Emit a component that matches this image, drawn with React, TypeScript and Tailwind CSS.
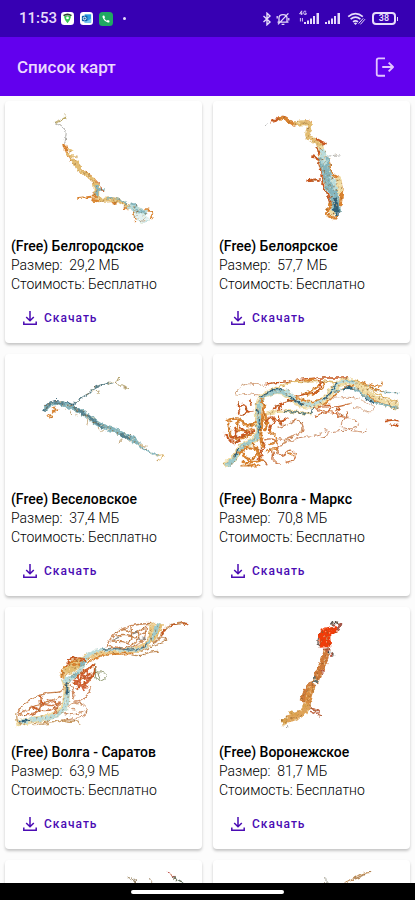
import type { ReactNode } from 'react';

interface Stroke {
  d: string;
  c: string;
  w: number;
}

interface MapItem {
  name: string;
  size: string;
  viewBox: string;
  strokes: Stroke[];
}

const GOLD = '#e3bd72';
const ORANGE = '#d9822f';
const RUST = '#c8571f';
const TEAL = '#84b5bd';
const PALE = '#b9dcdc';
const DEEP = '#2f6078';
const GREY = '#8a8a86';
const CREAM = '#f0dca4';

const belgorod: Stroke[] = [
  { d: 'M165 80 L178 75 L198 60 M180 72 L196 68', c: '#b9a765', w: 4 },
  { d: 'M165 80 L182 90 L200 103 L197 125 L194 142', c: GREY, w: 2 },
  { d: 'M192 143 L198 168 L210 188 L228 200 L236 220 L262 236 L282 250 L288 270', c: ORANGE, w: 11 },
  { d: 'M200 170 L212 188 L229 202 L238 222 L262 237 L282 251 L288 272', c: GOLD, w: 9 },
  { d: 'M226 196 L234 212 L238 224', c: GOLD, w: 15 },
  { d: 'M204 162 L222 160 L210 168 M210 180 L232 181', c: GOLD, w: 5 },
  { d: 'M288 262 L290 285 L288 305', c: GOLD, w: 17 },
  { d: 'M290 268 L292 300 M295 280 L314 280', c: TEAL, w: 8 },
  { d: 'M286 258 L300 262 M278 290 L286 292 M302 272 L312 288', c: RUST, w: 3 },
  { d: 'M232 306 L260 304 L290 300', c: ORANGE, w: 6 },
  { d: 'M282 312 L320 312 L345 308 L370 322 L396 338', c: GOLD, w: 12 },
  { d: 'M275 311 L296 314 M338 320 L350 321 M368 336 L386 338', c: ORANGE, w: 10 },
  { d: 'M320 309 L345 305 L368 316 L384 324', c: TEAL, w: 4 },
  { d: 'M388 328 L412 345 L442 352', c: PALE, w: 20 },
  { d: 'M410 352 L424 370 L442 364', c: '#e2f1f1', w: 16 },
  { d: 'M392 322 L415 328 L402 336 M396 340 L440 354 M425 342 L440 356', c: TEAL, w: 5 },
  { d: 'M402 345 L408 370 L425 381 L446 374', c: PALE, w: 3 },
  { d: 'M432 340 L450 338 L460 354 L448 370 M400 348 L408 375', c: ORANGE, w: 5 },
];

const beloyarsk: Stroke[] = [
  { d: 'M174 90 L182 84', c: GREY, w: 2 },
  { d: 'M190 74 L206 78 L214 64 L236 62 L246 78 L264 86', c: RUST, w: 8 },
  { d: 'M214 66 L236 64 L248 80 L275 84 L302 76 L312 84', c: ORANGE, w: 11 },
  { d: 'M262 84 L290 78 L310 84 L304 102 L300 122 L322 134 L344 142', c: GOLD, w: 15 },
  { d: 'M326 128 L342 138 L356 142 L340 148', c: RUST, w: 8 },
  { d: 'M304 120 L325 135 L346 152 L338 176', c: GOLD, w: 13 },
  { d: 'M340 150 L346 176 L350 205', c: CREAM, w: 18 },
  { d: 'M316 182 L336 184 L336 200 M330 154 L338 176 M334 190 L340 212', c: RUST, w: 8 },
  { d: 'M368 184 L376 178 L398 177', c: GREY, w: 2 },
  { d: 'M350 180 L366 184 L370 235 L402 246 L404 300', c: ORANGE, w: 7 },
  { d: 'M298 254 L322 250 L338 252', c: RUST, w: 6 },
  { d: 'M350 200 L356 250 L376 280 L396 258', c: CREAM, w: 28 },
  { d: 'M394 244 L396 270 L398 300', c: CREAM, w: 18 },
  { d: 'M350 180 L354 225 L364 262 L382 295 L388 350', c: TEAL, w: 28 },
  { d: 'M344 160 L354 205 M370 240 L382 256 L386 280', c: PALE, w: 14 },
  { d: 'M340 210 L344 250 L348 270 L362 296 L372 320', c: RUST, w: 5 },
  { d: 'M370 318 L368 336 L354 354 L376 366 L393 366 M404 288 L400 330', c: ORANGE, w: 9 },
  { d: 'M366 344 L380 356', c: CREAM, w: 12 },
  { d: 'M382 306 L390 320 L390 362 M380 340 L392 350', c: DEEP, w: 10 },
];

const veselovsk: Stroke[] = [
  { d: 'M222 162 L246 142 L268 130 L282 112 L300 106 L340 98', c: '#5b8089', w: 4 },
  { d: 'M280 120 L304 124 L290 132 M325 100 L352 92 L360 84 M345 98 L364 108 L384 116', c: '#b7a775', w: 3 },
  { d: 'M132 182 L142 164 L166 154 L186 160 L222 168', c: DEEP, w: 12 },
  { d: 'M134 178 L150 160 L176 158 L216 172 L244 184 L268 204 L302 228 L334 238 L356 246', c: TEAL, w: 14 },
  { d: 'M132 184 L144 164 L164 156 L190 162 M222 172 L256 192 L284 214 L310 234', c: '#55828f', w: 8 },
  { d: 'M350 244 L376 260 L398 264 L414 282', c: TEAL, w: 16 },
  { d: 'M360 252 L380 264 L394 262', c: '#55828f', w: 8 },
  { d: 'M408 270 L420 290 L444 304 L478 318', c: TEAL, w: 6 },
  { d: 'M470 318 L490 312 L492 322 L470 330 M484 322 L494 318', c: GOLD, w: 3 },
  { d: 'M146 192 L158 194 L150 206 L144 196 M156 176 L164 168 L168 184 L156 186 M170 182 L178 180', c: ORANGE, w: 5 },
  { d: 'M196 172 L196 182 M208 182 L216 196 M226 188 L230 202 M264 206 L260 228 M294 232 L298 248 L312 240 M364 264 L360 278 M384 270 L392 276 M420 286 L440 288', c: '#cdb58e', w: 3 },
];

const marks: Stroke[] = [
  { d: 'M84 134 L92 112 L126 100 L160 100 L176 112 M86 136 L108 128 L136 134 L158 134', c: '#d8a988', w: 3 },
  { d: 'M176 102 L198 98 L246 96 L280 88 L320 84 L370 84 L420 84', c: RUST, w: 4 },
  { d: 'M196 118 L230 104 L262 92 L310 96 L345 92 L390 96', c: GOLD, w: 5 },
  { d: 'M290 92 L322 86 M286 134 L320 122 L348 94 L356 106 L336 124 L300 136', c: ORANGE, w: 6 },
  { d: 'M270 140 L300 128 L330 130 L345 104 L330 90 M336 92 L350 98', c: RUST, w: 4 },
  { d: 'M52 344 L84 330 L94 300 L116 280 L148 270 L158 240 L152 186 L158 146 L186 126 L220 120 L248 138 L270 160 L310 168 L345 156 L372 128 L398 94 L440 96 L472 122 L510 152 L574 170', c: CREAM, w: 20 },
  { d: 'M240 128 L276 146 L310 158 L345 146 M346 166 L380 142 L402 116 L440 106 M480 132 L510 160 L574 174', c: ORANGE, w: 5 },
  { d: 'M60 346 L86 328 L96 298 L116 280 L150 268 L158 240 L154 186 L158 150 L184 128 L220 122 L246 136', c: '#9cc9cb', w: 13 },
  { d: 'M236 122 L256 138 L272 158 L310 166', c: PALE, w: 12 },
  { d: 'M310 168 L345 154 L372 130 L390 98 L414 92 L448 100', c: PALE, w: 9 },
  { d: 'M160 142 L172 132 L200 118 L234 118 M244 136 L260 148 L276 160 L290 164 M350 148 L372 126 L390 98 M146 180 L156 184 M84 320 L94 296 M158 210 L156 250', c: DEEP, w: 5 },
  { d: 'M380 126 L420 112 L444 116 L476 140 L510 160 L574 174', c: TEAL, w: 6 },
  { d: 'M404 122 L420 112 L436 112 M474 144 L504 160', c: DEEP, w: 5 },
  { d: 'M420 92 L464 96 L492 112 L530 128 L574 128', c: TEAL, w: 4 },
  { d: 'M440 90 L470 100 L500 126 L540 146 L574 156', c: GOLD, w: 6 },
  { d: 'M460 96 L500 108 L520 110 L526 98 M488 112 L526 124', c: ORANGE, w: 4 },
  { d: 'M164 214 L176 192 L206 184 L256 184 L314 192', c: CREAM, w: 9 },
  { d: 'M230 184 L262 184 L314 194 L320 174', c: '#527a80', w: 4 },
  { d: 'M160 150 L172 154 L168 190 L164 230 L160 262 L166 290 M176 190 L182 212 L174 240', c: ORANGE, w: 9 },
  { d: 'M92 156 L100 180 L92 192 L112 196 L130 182 M96 166 L112 160 L120 184 L140 182 M128 150 L132 170', c: RUST, w: 5 },
  { d: 'M60 214 L72 206 L96 204 L110 222 L136 228 L148 214 M62 218 L72 240 L66 256 L86 268 L110 264 L140 250 M96 206 L84 236 L106 246 L140 236', c: ORANGE, w: 7 },
  { d: 'M52 250 L66 264 L80 282 L100 272 M72 262 L96 262 L124 252 M80 232 L92 246 L78 270 M98 228 L118 254 L142 242', c: RUST, w: 7 },
  { d: 'M92 314 L110 298 L128 290 L148 298 L150 318 L132 330 L112 322 L110 306 M104 336 L148 338 L168 326 M100 346 L160 346 M136 280 L158 300 L156 330', c: ORANGE, w: 7 },
  { d: 'M162 300 L176 286 L166 276 M150 330 L166 318 L164 300 M176 214 L190 196 L208 214 L184 228 L192 250', c: RUST, w: 6 },
  { d: 'M196 180 L206 168 L222 166 M208 182 L224 176 L220 158 M222 164 L240 150 L262 154 M200 200 L212 220 L244 204 M216 198 L224 224', c: RUST, w: 5 },
  { d: 'M212 232 L240 226 L262 208 L286 216 L290 246 L262 256 L240 270 L212 266 M220 290 L236 270 L260 274', c: '#cf8a5e', w: 4 },
  { d: 'M172 270 L196 262 L218 284 L206 308 L226 320 L246 296 L268 310 L262 332 L236 338 M184 296 L204 306 L194 330 L218 346 M168 330 L184 346', c: '#cc7440', w: 4 },
  { d: 'M188 240 L212 256 L204 282 L184 284 M176 306 L194 294 L212 300 M240 308 L262 318 M178 250 L200 248', c: ORANGE, w: 4 },
  { d: 'M320 176 L352 168 L392 172 L430 160 M322 200 L350 186 L382 184 L398 200 L424 206 L420 184 M330 178 L360 186 L372 176', c: '#d0733f', w: 4 },
  { d: 'M354 168 L370 168 M388 178 L398 176', c: RUST, w: 7 },
  { d: 'M366 146 L424 140 L460 146 L478 160 L498 166 L502 182 L478 188 L466 176 L440 172', c: '#dcb196', w: 3 },
  { d: 'M390 186 L406 200 L436 206 L456 218 L452 234 L420 238 L398 228 L412 206', c: '#cf9270', w: 3 },
  { d: 'M260 268 L294 258 L344 254 L352 238 L366 240 L360 260 L344 264 M366 246 L404 240 L440 242 L470 248 L480 238', c: '#cc8c68', w: 3 },
  { d: 'M532 216 L552 208 L574 212 M548 222 L566 228 L574 226', c: RUST, w: 5 },
];

const saratov: Stroke[] = [
  { d: 'M48 370 L86 362 L130 356 L172 344 L196 318 L202 270 L194 238', c: CREAM, w: 20 },
  { d: 'M54 368 L100 358 L150 354 L182 340 L200 316 L204 270', c: PALE, w: 13 },
  { d: 'M54 366 L90 360 M196 240 L204 256 L200 284', c: DEEP, w: 6 },
  { d: 'M186 232 L202 204 L240 180 L280 164 L330 156 L400 152 L440 138 L456 110 L468 70', c: '#ecc988', w: 18 },
  { d: 'M198 214 L224 192 L250 186', c: GOLD, w: 32 },
  { d: 'M188 206 L210 184 L244 176 M216 196 L244 192 M186 208 L184 236', c: ORANGE, w: 6 },
  { d: 'M250 190 L246 208 L226 222 L206 244 L190 236', c: PALE, w: 12 },
  { d: 'M212 232 L236 218 M246 176 L262 178 L240 198', c: TEAL, w: 6 },
  { d: 'M250 182 L262 160 L312 148 L354 148 L408 152 L442 138', c: PALE, w: 10 },
  { d: 'M310 148 L348 144 L396 152 L430 144 L446 128', c: '#527a88', w: 4 },
  { d: 'M444 130 L462 108 L470 70 M454 120 L480 70', c: '#9cc9cb', w: 9 },
  { d: 'M456 128 L474 100 L486 72 M450 112 L452 70', c: GOLD, w: 7 },
  { d: 'M318 140 L334 108 L364 86 L404 74 L450 70 M322 138 L370 146 L410 138 L434 118 L440 76', c: '#cd8a5a', w: 4 },
  { d: 'M346 108 L380 104 L404 116 L440 94 M364 92 L376 84 L402 104 L436 82 M332 124 L364 122 L398 138 L420 110 L412 92 M392 80 L398 102 L386 130', c: '#c9854f', w: 4 },
  { d: 'M340 118 L360 112 M398 102 L412 96 M414 120 L436 112', c: GREY, w: 4 },
  { d: 'M458 130 L478 120 L490 92 L512 74 L540 70 L566 72', c: '#c98c5a', w: 6 },
  { d: 'M510 80 L524 72 M544 70 L568 73 M492 88 L486 108', c: RUST, w: 6 },
  { d: 'M470 114 L500 112 L500 122 L478 128 L450 144 L420 154 M390 164 L420 170 L446 156 L476 154', c: '#c69362', w: 4 },
  { d: 'M262 190 L290 168 L340 162 L400 160', c: ORANGE, w: 5 },
  { d: 'M204 178 L240 168 L252 180 L242 186 M196 200 L206 184', c: RUST, w: 7 },
  { d: 'M226 236 L246 214 L270 206 L282 192 M222 254 L248 232 L274 222 M230 266 L256 250 L284 222 L286 196', c: RUST, w: 7 },
  { d: 'M220 240 L240 262 L264 258 M232 232 L252 272 M244 220 L264 246 M262 208 L268 236 L254 258', c: '#d4633a', w: 7 },
  { d: 'M282 190 L290 206 L284 232 L296 244 L316 238 L322 224 L304 214 L286 218 M292 214 L300 240', c: '#8e9a72', w: 3 },
  { d: 'M212 252 L226 284 L214 302 L238 304 L266 284 L272 256', c: '#d08a60', w: 4 },
  { d: 'M52 338 L70 310 L106 290 L150 276 L186 278 L196 252 M56 344 L100 318 L146 308 L186 286', c: '#cd8654', w: 4 },
  { d: 'M118 288 L126 316 L110 340 L70 346 M126 312 L156 320 L182 308 M92 322 L132 336 L172 322 M140 300 L176 300 L164 340', c: '#d07a48', w: 5 },
  { d: 'M120 290 L132 312 M96 320 L112 326', c: RUST, w: 6 },
  { d: 'M204 320 L226 302 L256 318 L262 338 L244 352 L214 358 L180 362 M214 328 L232 330 M196 340 L214 348 L250 334', c: '#d29a74', w: 4 },
  { d: 'M100 374 L150 372 L184 358 L206 366 L234 360 L240 374 M50 340 L50 372 L70 374 M130 372 L150 360', c: '#c99a62', w: 4 },
];

const voronezh: Stroke[] = [
  { d: 'M374 66 L382 62 L404 72 L398 84 M370 76 L378 66', c: '#58524e', w: 4 },
  { d: 'M376 76 L384 72 M396 74 L404 70 L400 84 L386 90', c: '#a4574a', w: 7 },
  { d: 'M340 92 L334 116 L332 132 L340 138', c: '#6b5b55', w: 4 },
  { d: 'M356 142 L354 120 L352 104 L358 88', c: '#f03c0a', w: 34 },
  { d: 'M358 96 L372 92 L390 88', c: '#f03c0a', w: 20 },
  { d: 'M348 150 L370 148', c: '#ad5033', w: 8 },
  { d: 'M360 152 L354 176 L342 202 L332 224 L324 246', c: '#cf7a38', w: 20 },
  { d: 'M364 156 L370 160 M376 162 L382 164', c: '#2c3c40', w: 8 },
  { d: 'M344 214 L352 208 L350 222 M370 170 L376 160', c: '#b34a35', w: 4 },
  { d: 'M322 228 L322 246 M326 240 L334 244', c: '#5c7274', w: 7 },
  { d: 'M320 250 L304 268 L292 286 L288 304', c: '#cf7a38', w: 20 },
  { d: 'M314 258 L306 290 L298 318', c: '#d98d40', w: 22 },
  { d: 'M302 312 L294 334 L276 344 L256 354 L238 358', c: '#dfa458', w: 22 },
  { d: 'M246 338 L268 344 M222 362 L244 360 M226 372 L242 366 M288 320 L300 312', c: '#d8a04c', w: 9 },
  { d: 'M306 322 L322 326 L338 338 L340 350 M310 334 L336 344', c: '#c06a4a', w: 5 },
  { d: 'M238 378 L240 382', c: GREY, w: 2 },
];

const nextLeft: Stroke[] = [
  { d: 'M386 234 L396 240 L410 248 L430 270 M398 232 L408 246 M408 234 L410 250', c: '#8d7a5a', w: 3 },
  { d: 'M448 234 L454 242 L450 260', c: '#b9a790', w: 3 },
  { d: 'M504 217 L516 224 L526 234', c: '#c0504a', w: 4 },
  { d: 'M524 232 L530 244 L550 250', c: '#6a7c6c', w: 4 },
];

const nextRight: Stroke[] = [
  { d: 'M356 232 L358 246 M352 244 L366 250', c: '#a9aaa0', w: 3 },
  { d: 'M412 250 L432 242 L452 228 L466 220 L492 217', c: '#c79a68', w: 4 },
  { d: 'M440 238 L468 228 L474 222', c: '#b58a5c', w: 4 },
];

const maps: MapItem[] = [
  { name: 'Белгородское', size: '29,2 МБ', viewBox: '15 15 591 405', strokes: belgorod },
  { name: 'Белоярское', size: '57,7 МБ', viewBox: '18 15 591 405', strokes: beloyarsk },
  { name: 'Веселовское', size: '37,4 МБ', viewBox: '15 12 591 405', strokes: veselovsk },
  { name: 'Волга - Маркс', size: '70,8 МБ', viewBox: '18 12 591 405', strokes: marks },
  { name: 'Волга - Саратов', size: '63,9 МБ', viewBox: '15 21 591 405', strokes: saratov },
  { name: 'Воронежское', size: '81,7 МБ', viewBox: '18 21 591 405', strokes: voronezh },
];

// rounds the corners of a polyline path by running curves through segment midpoints
const smooth = (d: string) =>
  d
    .split('M')
    .filter(Boolean)
    .map((part) => {
      const pts = part.split('L').map((p) => p.trim().split(' ').map(Number));
      const last = pts[pts.length - 1];
      let out = `M${pts[0].join(' ')}`;
      for (let i = 1; i < pts.length - 1; i++) {
        const [x, y] = pts[i];
        const [nx, ny] = pts[i + 1];
        out += `Q${x} ${y} ${(x + nx) / 2} ${(y + ny) / 2}`;
      }
      return `${out}L${last.join(' ')}`;
    })
    .join('');

const MapPreview = ({ viewBox, strokes }: { viewBox: string; strokes: Stroke[] }) => (
  <svg viewBox={viewBox} className="block h-[135px] w-full" fill="none" aria-hidden="true">
    <g filter="url(#shore)" strokeLinejoin="round">
      {strokes.map((s, i) => (
        <path key={i} d={smooth(s.d)} stroke={s.c} strokeWidth={s.w} />
      ))}
    </g>
  </svg>
);

const Card = ({ children }: { children: ReactNode }) => (
  <article className="h-[242px] rounded bg-white shadow-[0_2px_3px_rgba(0,0,0,0.22)]">{children}</article>
);

const MapCard = ({ item }: { item: MapItem }) => (
  <Card>
    <MapPreview viewBox={item.viewBox} strokes={item.strokes} />
    <div className="px-1.5 pt-px text-sm leading-[19px] font-light text-black">
      <h2 className="font-medium">(Free) {item.name}</h2>
      <p className="whitespace-pre">Размер:  {item.size}</p>
      <p>Стоимость: Бесплатно</p>
    </div>
    <button
      type="button"
      className="mt-2 ml-4 flex h-8 items-center gap-[5px] text-xs font-medium tracking-[1px] text-[#4b0cb4]"
    >
      <svg viewBox="0 0 18 18" className="size-[18px]" fill="none" stroke="currentColor" strokeWidth="1.5">
        <path d="M9 2V11.5M5.2 8L9 11.8L12.8 8M2.8 12.5V15.2H15.2V12.5" />
      </svg>
      Скачать
    </button>
  </Card>
);

const Signal = () => (
  <svg viewBox="0 0 16 13" className="h-[13px] w-4" fill="currentColor">
    <path d="M0 10h2v2H0zM3 8.5h2V12H3zM6 6.5h2V12H6zM9 4h2v8H9zM12.5 1h2.5v11h-2.5z" />
  </svg>
);

const StatusBar = () => (
  <div className="flex h-[37px] shrink-0 items-center bg-[#3700b3] pr-[17px] pl-[19px] text-[#e6dcfa]">
    <span className="text-[15px] font-medium">11:53</span>
    <div className="ml-1 flex items-center gap-1.5">
      <svg viewBox="0 0 14 14" className="size-[13px]">
        <rect width="14" height="14" rx="3.5" fill="#fff" />
        <path d="M3.2 4.8Q7 2.8 10.8 4.8Q10.5 8 7 12Q3.5 8 3.2 4.8Z" fill="#35c653" />
        <path d="M2.2 3.2Q7 -.2 11.8 3.2L10.8 4.6Q7 2.6 3.2 4.6Z" fill="#31413a" />
        <circle cx="7" cy="6.4" r="1.5" fill="#fff" />
      </svg>
      <svg viewBox="0 0 14 14" className="size-[13px]">
        <rect width="14" height="14" rx="3.5" fill="#fff" />
        <path d="M5 2.5H12V11.5H5Z" fill="#2e9be0" />
        <path d="M5 7L8.5 9.5L12 7V11.5H5Z" fill="#7cc8f4" />
        <rect x="2" y="4" width="6" height="6" rx="1" fill="#0f5fae" />
        <circle cx="5" cy="7" r="1.5" fill="none" stroke="#fff" strokeWidth="1" />
      </svg>
      <svg viewBox="0 0 14 14" className="size-[14px]">
        <rect width="14" height="14" rx="3.5" fill="#20a862" />
        <path
          d="M4.1 3.6L5.4 3.8L6 5.4L5.3 6.2Q6.2 7.9 7.9 8.8L8.7 8L10.3 8.6L10.5 10Q9.9 10.8 8.9 10.5Q4.6 9 3.5 5Q3.4 4 4.1 3.6Z"
          fill="#fff"
        />
      </svg>
    </div>
    <span className="ml-2.5 size-[3px] rounded-full bg-current" />
    <div className="ml-auto flex items-center">
      <svg viewBox="0 0 10 14" className="h-3.5 w-2.5" fill="none" stroke="currentColor" strokeWidth="1.4">
        <path d="M1.5 4L8 10L5 12.8V1.2L8 4L1.5 10" />
      </svg>
      <svg viewBox="0 0 14 14" className="ml-1 size-3.5" fill="none" stroke="currentColor" strokeWidth="1.3">
        <path d="M3 10.2V6Q3 2.6 7 2.6Q11 2.6 11 6V10.2M1.5 10.2H12.5M5.6 12.4H8.4M12.4 1.4L2 12.4M1.2 4V6.5M12.8 6V8.5" />
      </svg>
      <span className="relative ml-3.5 flex">
        <svg viewBox="0 0 8 12" className="absolute -top-0.5 -left-[5px] h-3 w-2" aria-label="4G" fill="none" stroke="currentColor" strokeWidth="0.9">
          <path d="M2.7 5V.8L.6 3.8H3.6M7.2 1.3Q4.6 .2 4.6 2.8Q4.6 5.2 7.2 4.4V3H6M1.4 11.5V8M3.4 8V11.5" />
        </svg>
        <Signal />
      </span>
      <span className="ml-[5px] flex">
        <Signal />
      </span>
      <svg viewBox="0 0 20 14" className="ml-1.5 h-3.5 w-5" fill="none" stroke="currentColor" strokeWidth="1.7">
        <path d="M1.2 4.6Q8.5 -1.2 15.8 4.6M3.6 7.2Q8.5 3.2 13.4 7.2M6 9.8Q8.5 7.8 11 9.8" />
        <path d="M8.5 13L6.8 11.2Q8.5 10 10.2 11.2Z" fill="currentColor" stroke="none" />
        <path d="M11.6 11.6L16.2 6.4M13.4 12.4L18 7.2" strokeWidth="1" />
      </svg>
      <span className="ml-[5px] flex h-[13px] w-6 items-center justify-center rounded border-2 border-current text-[9px] leading-none font-semibold">
        38
      </span>
      <span className="ml-px h-1 w-px bg-current" />
    </div>
  </div>
);

const App = () => {
  return (
    <div className="flex h-screen flex-col bg-[#fcfcfc] font-[Roboto,sans-serif]">
      {/* ragged banks and depth speckle shared by all map previews */}
      <svg className="absolute size-0" aria-hidden="true">
        <filter id="shore" x="-10%" y="-10%" width="120%" height="120%" colorInterpolationFilters="sRGB">
          <feTurbulence type="fractalNoise" baseFrequency="0.08" numOctaves="2" seed="4" result="noise" />
          <feDisplacementMap in="SourceGraphic" in2="noise" scale="15" xChannelSelector="R" yChannelSelector="G" result="rough" />
          <feTurbulence type="fractalNoise" baseFrequency="0.14" numOctaves="2" seed="9" result="grain" />
          <feColorMatrix in="grain" type="matrix" values="0 0 0 0 0.55  0 0 0 0 0.36  0 0 0 0 0.16  3 0 0 0 -1.7" result="dark" />
          <feComposite in="dark" in2="rough" operator="in" result="darkSpots" />
          <feColorMatrix in="grain" type="matrix" values="0 0 0 0 1  0 0 0 0 0.95  0 0 0 0 0.8  0 3 0 0 -1.75" result="light" />
          <feComposite in="light" in2="rough" operator="in" result="lightSpots" />
          <feMerge>
            <feMergeNode in="rough" />
            <feMergeNode in="darkSpots" />
            <feMergeNode in="lightSpots" />
          </feMerge>
        </filter>
      </svg>

      <StatusBar />

      <header className="flex h-[59px] shrink-0 items-center justify-between bg-[#6200ee] pr-[19px] pl-[17px] text-[#ecd9ff]">
        <h1 className="pt-0.5 text-[17px] font-medium">Список карт</h1>
        <button type="button" aria-label="Выйти" className="text-[#e2c4ff]">
          <svg viewBox="0 0 24 24" className="size-[22px]" fill="none" stroke="currentColor" strokeWidth="2" strokeLinejoin="round">
            <path d="M12 2.5H5Q3 2.5 3 4.5V19.5Q3 21.5 5 21.5H12M9 12H20.5M16 7.2L20.8 12L16 16.8" />
          </svg>
        </button>
      </header>

      <main className="min-h-0 flex-1 overflow-y-auto px-[5px] pt-[5px] [scrollbar-width:none]">
        <div className="grid grid-cols-2 gap-[11px]">
          {maps.map((item) => (
            <MapCard key={item.name} item={item} />
          ))}
          <Card>
            <MapPreview viewBox="15 180 591 405" strokes={nextLeft} />
          </Card>
          <Card>
            <MapPreview viewBox="18 180 591 405" strokes={nextRight} />
          </Card>
        </div>
      </main>

      <div className="flex h-[17px] shrink-0 items-center justify-center bg-black">
        <span className="h-1 w-[153px] rounded-full bg-white" />
      </div>
    </div>
  );
};

export default App;
